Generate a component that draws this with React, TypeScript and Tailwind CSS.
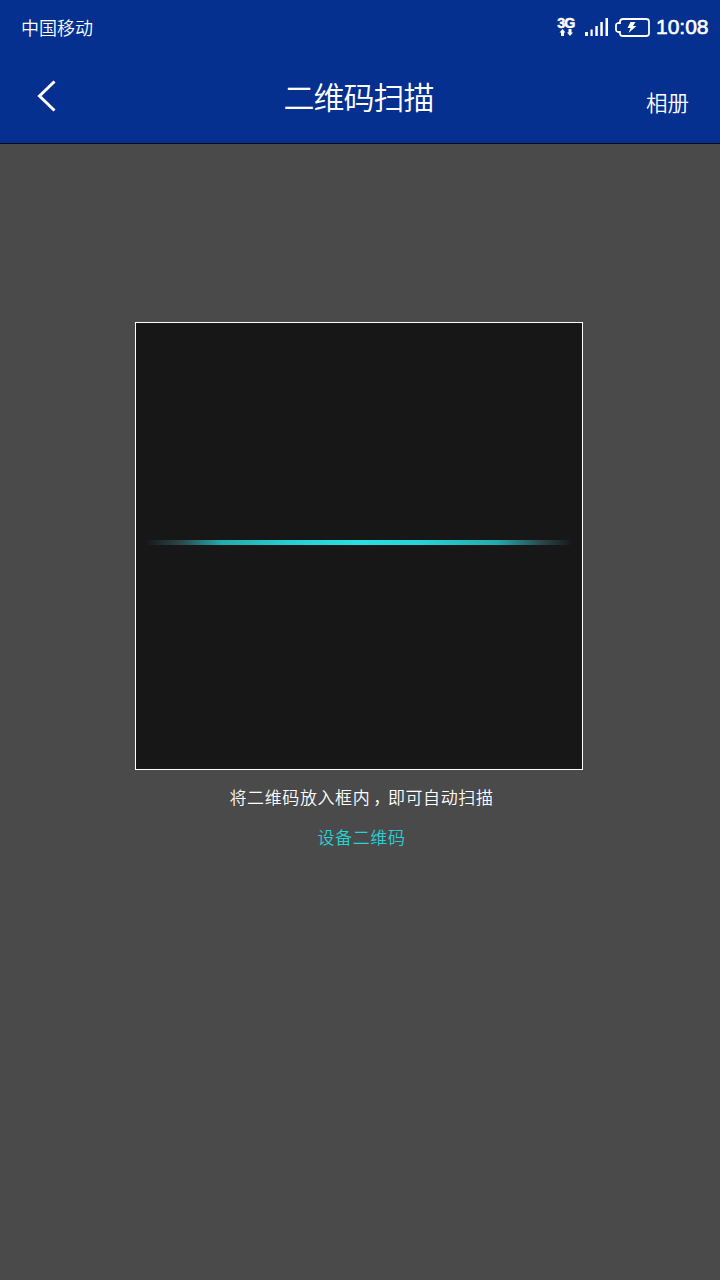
function StatusIcons() {
  return (
    <div className="flex h-full items-start">
      <div className="mt-[17px] flex w-[18px] flex-col items-center">
        <span className="flex h-[12px] origin-center scale-x-110 scale-y-115 items-center font-['Liberation_Sans',sans-serif] text-[13px] leading-[12px] font-bold tracking-[-0.8px] [-webkit-text-stroke:0.4px_white]">
          3G
        </span>
        <svg width="18" height="7" viewBox="0 0 18 7" fill="white">
          <path d="M5.500 0 8.500 3.500H7V7H4V3.500H2.500Z" />
          <path d="M13 7 16 3.500H14.500V0H11.500V3.500H10Z" />
        </svg>
      </div>
      <svg className="mt-[18px] ml-[10px]" width="24" height="18" viewBox="0 0 24 18" fill="white">
        <rect x="0" y="14" width="3" height="4" />
        <rect x="5.5" y="11.5" width="2.2" height="6.5" />
        <rect x="10.3" y="8" width="2.5" height="10" />
        <rect x="15.3" y="4" width="2.5" height="14" />
        <rect x="20.5" y="0" width="2.5" height="18" />
      </svg>
      <svg className="mt-[18px] ml-[6px]" width="35" height="19" viewBox="0 0 35 19" fill="none">
        <path
          d="M8 1h23Q34 1 34 3.500v12Q34 18 31 18H8Q5 18 5 15.500V14H3Q1 13.500 1 12V7Q1 5.500 3 5H5V3.500Q5 1 8 1Z"
          stroke="white"
          strokeWidth="1.8"
        />
        <path d="M15.500 4h5l-2.500 4h3.500L13.500 15l2-5H12.500Z" fill="white" />
      </svg>
      <span className="mt-[14px] ml-[6px] w-[53px] font-['Liberation_Sans',sans-serif] text-[21px] leading-[26px] [-webkit-text-stroke:0.6px_white]">
        10:08
      </span>
    </div>
  );
}

export default function App() {
  return (
    <div className="flex h-[1280px] w-[720px] flex-col overflow-hidden bg-[#4a4a4b] font-['Noto_Sans_CJK_SC',sans-serif] font-[350] text-white">
      <header className="flex h-[144px] flex-col border-b border-[#020a24] bg-[#05308f]">
        <div className="flex h-[54px] justify-between pr-[11px] pl-[21px]">
          <span className="mt-[14px] text-[18px] leading-[26px]">中国移动</span>
          <StatusIcons />
        </div>
        <div className="grid h-[89px] grid-cols-[200px_1fr_200px] items-start">
          <button className="mt-[26px] ml-[36px] w-[20px]" aria-label="返回">
            <svg width="20" height="32" viewBox="0 0 20 32" fill="none">
              <path d="M18.500 1.500 3.500 16 18.500 30.500" stroke="white" strokeWidth="3" />
            </svg>
          </button>
          <h1 className="mt-[21px] mr-[3px] text-center text-[31px] leading-[42px] font-[350] tracking-[-1px]">
            二维码扫描
          </h1>
          <button className="mt-[32px] mr-[31px] justify-self-end text-[21.500px] leading-[32px]">
            相册
          </button>
        </div>
      </header>
      <main className="flex flex-col items-center">
        <div className="mt-[178px] mr-[2px] flex h-[448px] w-[448px] flex-col border border-white bg-[#171717] pt-[217px]">
          <div className="h-[5px] w-full bg-[linear-gradient(to_right,#171717_2%,#29474a_10%,#24a9ab_19%,#27cdd0_34%,#28e0e2_50%,#27d3d6_64%,#24a9ab_81%,#29474a_91%,#171717_98%)]" />
        </div>
        <p className="mt-[14px] ml-[3px] text-[17px] leading-[26px] tracking-[0.6px]">
          将二维码放入框内
          <span className="mr-[5.5px] ml-[3px] [font-feature-settings:'halt']">，</span>
          即可自动扫描
        </p>
        <a className="mt-[14px] ml-[3px] text-[17px] leading-[26px] tracking-[0.6px] text-[#26d2d4]">
          设备二维码
        </a>
      </main>
    </div>
  );
}
